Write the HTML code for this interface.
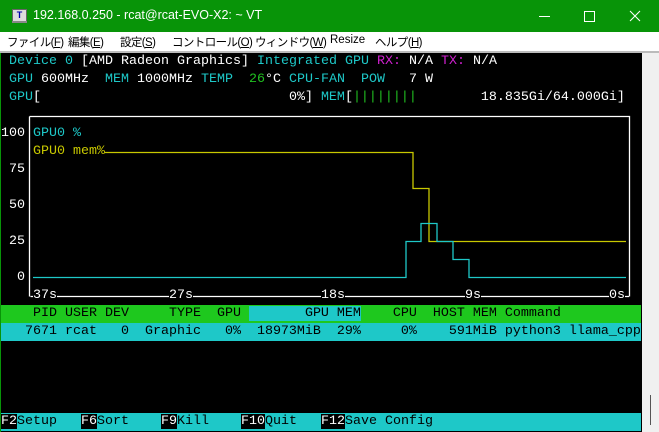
<!DOCTYPE html>
<html><head><meta charset="utf-8"><style>
*{margin:0;padding:0}
body{width:659px;height:432px;overflow:hidden;background:#000;position:relative;font-family:"Liberation Sans","Noto Sans CJK JP",sans-serif}
#title{position:absolute;left:0;top:0;width:659px;height:32px;background:#089408;color:#fff;font-size:12.5px}
#menu{position:absolute;left:0;top:32px;width:659px;height:19px;background:#fff;border-bottom:2px solid #bbb;font-size:11.5px;color:#000}
#menu span{position:absolute;top:2px;letter-spacing:-0.6px}
.t{position:absolute;left:1px;font-family:"Liberation Mono",monospace;font-size:13.33px;line-height:18px;height:18px;white-space:pre;color:#fff}
.c{color:#1ec8c8}.m{color:#d020d0}.g{color:#20c020}.y{color:#c8c800}
#sb{position:absolute;left:642px;top:53px;width:17px;height:379px;background:#f0f0f0}
</style></head><body>
<div id="title">
<div style="position:absolute;left:12px;top:9px;width:13px;height:11px;background:#ddd;border:1px solid #666;font-size:9px;color:#00a;text-align:center;line-height:10px;font-weight:bold">T</div>
<div style="position:absolute;left:12px;top:21px;width:15px;height:2px;background:#888"></div>
<div style="position:absolute;left:33px;top:8px">192.168.0.250 - rcat@rcat-EVO-X2: ~ VT</div>
<div style="position:absolute;left:539px;top:16px;width:11px;height:1px;background:#fff"></div>
<div style="position:absolute;left:584px;top:11px;width:9px;height:9px;border:1px solid #fff"></div>
<svg style="position:absolute;left:629px;top:10px" width="12" height="12"><path d="M1 1L11 11M11 1L1 11" stroke="#fff" stroke-width="1"/></svg>
</div>
<div id="menu">
<span style="left:7px">ファイル(<u>F</u>)</span>
<span style="left:68px">編集(<u>E</u>)</span>
<span style="left:120px">設定(<u>S</u>)</span>
<span style="left:172px">コントロール(<u>O</u>)</span>
<span style="left:255px">ウィンドウ(<u>W</u>)</span>
<span style="left:330px;letter-spacing:0">Resize</span>
<span style="left:375px">ヘルプ(<u>H</u>)</span>
</div>
<div style="position:absolute;left:0;top:53px;width:1px;height:379px;background:#089408"></div>
<div id="sb"><div style="position:absolute;left:8px;top:342px;width:1px;height:30px;background:#555"></div></div>

<div class="t" style="top:53px"> <span class="c">Device 0</span> [AMD Radeon Graphics] <span class="c">Integrated GPU</span> <span class="m">RX:</span> N/A <span class="m">TX:</span> N/A</div>
<div class="t" style="top:71px"> <span class="c">GPU</span> 600MHz  <span class="c">MEM</span> 1000MHz <span class="c">TEMP</span>  <span class="g">26</span>°C <span class="c">CPU-FAN</span>  <span class="c">POW</span>   7 W</div>
<div class="t" style="top:89px"> <span class="c">GPU</span>[                               0%] <span class="c">MEM</span>[<span class="g">||||||||</span>        18.835Gi/64.000Gi]</div>

<div class="t" style="top:125px">100</div>
<div class="t" style="top:161px"> 75</div>
<div class="t" style="top:197px"> 50</div>
<div class="t" style="top:233px"> 25</div>
<div class="t" style="top:269px">  0</div>

<svg style="position:absolute;left:0;top:0" width="659" height="432">
<path d="M29.5 116.5H629.5V296.5M29.5 116.5V296.5" fill="none" stroke="#fff" stroke-width="1.3"/>
<path d="M30.5 296.5H629" stroke="#fff" stroke-width="1.3"/>
<path d="M105 152.5H413V188.5H429V241.5H626" fill="none" stroke="#c8c800" stroke-width="1.3"/>
<path d="M33 277.5H406V241.5H421V223.5H437V241.5H453V259.5H469V277.5H626" fill="none" stroke="#1ec8c8" stroke-width="1.3"/>
</svg>
<div class="t" style="top:125px;left:33px"><span class="c">GPU0 %</span></div>
<div class="t" style="top:143px;left:33px"><span class="y">GPU0 mem%</span></div>
<div class="t" style="top:287px;left:33px;background:#000">37s</div>
<div class="t" style="top:287px;left:169px;background:#000">27s</div>
<div class="t" style="top:287px;left:321px;background:#000">18s</div>
<div class="t" style="top:287px;left:465px;background:#000">9s</div>
<div class="t" style="top:287px;left:609px;background:#000">0s</div>

<div class="t" style="top:305px;width:640px;background:#1ec81e;color:#000">    PID USER DEV     TYPE  GPU <span style="background:#1ec8c8">       GPU MEM</span>    CPU  HOST MEM Command</div>
<div class="t" style="top:323px;width:640px;background:#1ec8c8;color:#000">   7671 rcat   0  Graphic   0%  18973MiB  29%     0%    591MiB python3 llama_cpp</div>

<div class="t" style="top:413px;left:1px;width:640px;background:#1ec8c8;color:#000"><span style="background:#000;color:#fff">F2</span>Setup   <span style="background:#000;color:#fff">F6</span>Sort    <span style="background:#000;color:#fff">F9</span>Kill    <span style="background:#000;color:#fff">F10</span>Quit   <span style="background:#000;color:#fff">F12</span>Save Config</div>
</body></html>
